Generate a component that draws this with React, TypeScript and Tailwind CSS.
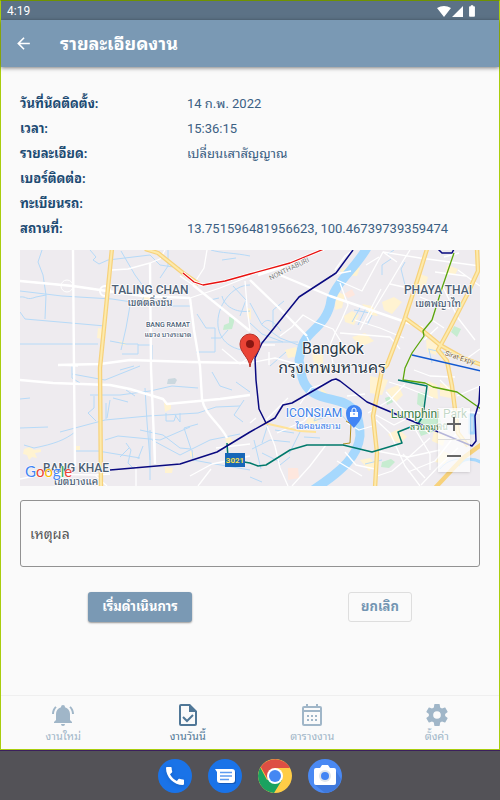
import React from "react";
import { MdArrowBack, MdBatteryFull, MdCall } from "react-icons/md";

const details = [
  { label: "วันที่นัดติดตั้ง:", value: "14 ก.พ. 2022" },
  { label: "เวลา:", value: "15:36:15" },
  { label: "รายละเอียด:", value: "เปลี่ยนเสาสัญญาณ" },
  { label: "เบอร์ติดต่อ:", value: "" },
  { label: "ทะเบียนรถ:", value: "" },
  { label: "สถานที่:", value: "13.751596481956623, 100.46739739359474" },
];

const canals = [
  "M20 297C27 296 26 301 36 297L46 295 43 275 38 262 42 250",
  "M20 312L25 319 71 323 105 326M46 295L45 319M20 291L62 296 112 299 158 306",
  "M20 344H72L98 344M90 250L96 257 93 260 99 264 108 260M108 260L150 255 160 265 180 268",
  "M121 251L135 275 146 290 141 305M131 300L126 328 121 350M110 341L126 344H138V354H122M138 345H152V360",
  "M168 250V266L160 278M158 306L190 306M197 314L206 328H215V352H196M210 300L219 298",
  "M250 285C232 285 216 306 218 326C220 341 231 350 250 351M222 296C225 309 240 313 250 311M228 330L221 338H211M233 286L246 300 240 316",
  "M211 250C220 253 236 253 250 256M222 260L236 258",
  "M72 366V378L80 383M72 374L105 380 140 366M20 399L30 398M90 395H120L150 391 172 386 198 388",
  "M94 396V408L88 413 96 421M106 403V419M110 400L107 418M113 398L128 402M126 390L135 396M145 388L147 422 150 460",
  "M20 428L48 427M60 432L105 420 148 416 198 413 216 407 240 406M75 432C65 440 54 444 34 448L24 445",
  "M105 440L118 436 160 440 190 427M140 430L163 435 180 448 191 449 184 428 198 424",
  "M126 443L131 450 128 463 134 469M129 448L120 457M143 446L138 459M75 451H98L140 458M150 430V480",
  "M166 413V421H174L176 415M175 415L180 422V413M152 440L180 455 210 440 240 434M192 450L193 460 215 464 250 470",
  "M212 372L220 386 232 390M244 400L234 415 243 422M236 382L250 392M120 370L134 366",
  "M250 303L262 325 280 338 306 348M250 323L262 334 283 342M262 324C268 316 275 323 281 331M270 366L286 352",
  "M250 342H298M273 327V310L284 301M382 275V265L391 259M388 254L394 250M405 262L401 269 405 285",
  "M361 306L352 322M366 308L358 325M372 315L367 325M354 310L370 313M429 350L432 363M428 349L451 354",
  "M252 449L270 440 290 442M262 453L280 462M275 430L294 433M300 432L289 454M280 465L290 457M250 477L262 482M254 440L261 469M268 424L262 443",
  "M319 410L314 421 325 417M321 427L334 424M304 437L320 438M340 413L347 421M365 464L382 460M440 469C450 456 467 458 480 461",
];

const minorRoads = [
  "M112 270L128 269 150 263 160 259 165 250",
  "M207 250L204 268 193 285M193 285L180 276",
  "M190 298L220 288 250 276M58 365L78 366M20 281L73 286",
  "M246 300L250 330M245 281L247 306M222 349L240 364 250 357",
  "M250 363L275 358 300 365M280 336L292 327 303 315 315 322 333 329 345 348",
  "M255 345L275 345M269 365V352M307 337L313 350M330 349L333 363M340 333L390 337 400 349",
  "M335 270L345 256 353 250M351 271L331 275M337 280L362 291 383 252 397 262",
  "M340 283L348 305 342 319 335 333 330 345M383 252L420 258 480 266",
  "M367 321L390 283 403 261 410 250M366 265L379 257M360 330L381 289M355 320L380 328 404 338",
  "M432 320L444 328M424 340L438 327M435 272L466 276M444 257L459 253M414 370L430 376 455 377",
  "M389 382L405 387 433 398M368 413L390 400 405 384M386 392L407 415 430 434",
  "M376 415L394 425 420 412M376 420L390 433 405 466 420 486M377 451L408 457 440 450",
  "M337 461L362 476M326 445L310 466 292 486M267 426L275 446 280 468 288 486M288 398L266 420",
  "M317 407L304 421 277 433M347 423L359 430 376 425M377 476L392 471 410 456 430 438",
  "M300 404L311 388 336 380M345 452L356 465 375 469M403 454L425 478M347 396L365 394",
  "M408 472L435 461 456 434M421 485L438 467 458 448M415 429L430 454 430 470",
  "M190 476L212 464 250 456M198 486L211 469M216 448L250 444",
  "M20 479L44 474 95 475 110 474M136 466V486M95 475L107 486M155 464V440",
  "M250 423L256 418M440 380L451 391M457 396L480 386M446 410L480 413M462 362L480 349",
  "M458 270L480 286M443 287L458 318 475 340M408 288L390 284M420 297L450 309",
];

const blocks = [
  "M140 295h12v6h-8zM98 328l5 1-1 10-5-1zM119 341l5 1 3 3h-6zM247 308l4 1v11l-4-4z",
  "M24 449l6-2 4 3 7-1v3l-6 1 2 5-5-1-3 3-2-5-4-1zM164 403h7v6l-6 3zM75 446h5v4h-5zM225 439l5-2 3 4-4 6zM190 451l4 2-1 6-3-4zM165 467l8 1-1 5h-7z",
  "M340 270l10-5 10 3-3 8-14-1zM336 291l9 4-3 13-7 2zM344 316l8-5 7 4-5 10-9-3zM327 300l8 2-2 7z",
  "M418 273l10 4-4 14-10-5zM382 302l12-5 8 5-10 12-8-4zM352 337l13-4 9 8-14 6zM362 304l10 2 6 10-8-1z",
  "M312 352l11 2v18l-7-2-3-10zM285 350l11-3 3 9-11 2zM321 388l7 6-2 8-6-5zM308 418l11 1-4 9-10-3z",
  "M370 376l18 4-6 15-12-2zM440 383l13 4 3 12-16-3zM388 434l11-5 8 8-7 6-8-3zM434 431l12 4-3 11-11-5z",
  "M360 460l10-2 7 7-8 6zM441 450l9 4-5 10-10-2zM386 390l12-5 5 10-7 7z",
  "M447 265l11 4-3 6-9-2zM428 381l9 4 1 14-9-3zM426 339l12 4-2 12-9-3z",
];

function JobMap() {
  return (
    <svg
      viewBox="20 250 460 236"
      preserveAspectRatio="xMidYMid slice"
      className="block h-full w-full"
      role="img"
      aria-label="แผนที่"
      fill="none"
      strokeLinejoin="round"
    >
      <rect x="0" y="200" width="520" height="330" fill="#eeebef" />
      <g fill="#fff3d1">
        {blocks.map((d) => (
          <path key={d} d={d} />
        ))}
      </g>
      <g fill="#c6ecd0">
        <path d="M229 317l5 1v4l-2 7-9 1 1-5 5-2z" />
        <path d="M454 326l7 3-4 8-6-5zM418 392l7 1-2 15-6-4zM385 398l6-2 2 6-6 3zM414 420l25-4 4 12-22 8zM382 462l9-3 4 3-6 6-8-1z" />
      </g>
      <path d="M168 379l7-1 2 2-2 4h-8z" fill="#cbd8df" />
      <path d="M344 294l8-5 3 6-7 3zM288 468l10 0 1 10-11 2z" fill="#fee7de" />
      <g stroke="#b6daf8" strokeWidth="1">
        {canals.map((d) => (
          <path key={d} d={d} />
        ))}
      </g>
      <path
        d="M368 246C356 268 336 282 331 300C328 326 304 333 302 347L299 360L302 377C309 404 340 395 352 408C358 414 360 423 360 436C358 456 342 471 313 490"
        stroke="#a6d8fd"
        strokeWidth="9"
      />
      <path d="M470 415h4v18h-4zM458 466C462 457 475 458 482 463" stroke="#a6d8fd" strokeWidth="3" />
      <g stroke="#fff" strokeWidth="1.3">
        {minorRoads.map((d) => (
          <path key={d} d={d} />
        ))}
      </g>
      <g stroke="#fff" strokeWidth="2.4">
        <path d="M20 281L73 286 100 290 143 296 190 298M73 250L74 368 75 466M150 263L151 368 155 464" />
        <path d="M190 298L194 330 200 366 202 399C205 416 220 423 227 438M193 285L250 331" />
        <path d="M58 365L100 364 130 360 190 362 250 363M20 380L53 383 110 385 130 389 163 399 167 404 220 399 250 395" />
        <path d="M250 280L277 306 307 336M280 275L330 296 423 328M258 275L285 266" />
        <circle cx="67" cy="286" r="6" strokeWidth="1" />
        <circle cx="105" cy="291" r="5" strokeWidth="2" />
      </g>
      <path d="M264 423L300 431 316 432" stroke="#ffe39a" strokeWidth="2" />
      <g stroke="#f7d27c" strokeWidth="4.4">
        <path d="M112 248L107 298 100 368 101 488M145 249L158 253 183 273 199 284" />
        <path d="M427 249L418 278 405 318 387 365 382 370 373 416 377 453 375 488M405 318L423 331 440 345 463 358 482 365" />
        <path d="M477 249L478 271 467 295 450 328 438 350 447 361 452 386 458 433 468 446M482 444L463 458 435 488" />
      </g>
      <g stroke="#fdeaab" strokeWidth="2">
        <path d="M112 248L107 298 100 368 101 488M145 249L158 253 183 273 199 284" />
        <path d="M427 249L418 278 405 318 387 365 382 370 373 416 377 453 375 488M405 318L423 331 440 345 463 358 482 365" />
        <path d="M477 249L478 271 467 295 450 328 438 350 447 361 452 386 458 433 468 446" />
      </g>
      <path d="M183 273L194 282 203 285 225 281 250 274 290 263 324 249" stroke="#fff" strokeWidth="3" />
      <path d="M183 273L194 282 203 285 225 281 250 274 290 263 324 249" stroke="#e8110f" strokeWidth="1.3" />
      <g strokeWidth="1.5">
        <path d="M454 253L442 288 432 320 423 331 424 336 412 353 405 368 403 380 425 383 433 387 457 392 481 409" stroke="#5aa50a" strokeWidth="1.3" />
        <path d="M412 355L481 371" stroke="#1259d1" />
        <path d="M346 421L351 424 350 443 343 444" stroke="#b08d1e" strokeWidth="1" />
        <path d="M227 443L228 458 238 461 250 463 258 466 266 465 290 450 307 445 343 445 372 452 402 443 398 432 418 424 423 416 427 386 398 380" stroke="#00796b" />
        <path d="M353 250L336 273 299 297 262 343 255 358 256 380 259 409 266 423" stroke="#0a0a80" />
        <path d="M110 470L180 464 217 452 250 432 266 423 275 418 283 405 292 403 332 380 336 379 340 381 367 402 417 423 472 446 476 441 475 416 479 403 480 386" stroke="#0a0a80" />
        <path d="M438 249L442 253H452L454 249" stroke="#0a0a80" />
      </g>
      <g fill="#4c6075" stroke="#fff" strokeWidth="1.6" paintOrder="stroke" textAnchor="middle">
        <g fontWeight="500">
          <text x="150" y="294" fontSize="12">TALING CHAN</text>
          <text x="150" y="306" fontSize="10">เขตตลิ่งชัน</text>
          <text x="168" y="327" fontSize="7">BANG RAMAT</text>
          <text x="168" y="337" fontSize="7">แขวง บางระมาด</text>
          <text x="438" y="294" fontSize="12">PHAYA THAI</text>
          <text x="438" y="307" fontSize="10">เขตพญาไท</text>
          <text x="76" y="472" fontSize="12">BANG KHAE</text>
          <text x="76" y="485" fontSize="10">เขตบางแค</text>
        </g>
        <text x="290" y="271" fontSize="7" fill="#777" strokeWidth="1" transform="rotate(-26 290 271)">NONTHABURI</text>
        <text x="459" y="360" fontSize="7" fill="#735b35" strokeWidth="1" transform="rotate(18 459 360)">Sirat Expy</text>
        <g fill="#2b3947">
          <text x="333" y="354" fontSize="16">Bangkok</text>
          <text x="332" y="373" fontSize="16">กรุงเทพมหานคร</text>
        </g>
        <g fill="#3b80e8">
          <text x="314" y="417" fontSize="12">ICONSIAM</text>
          <text x="318" y="429" fontSize="9">ไอคอนสยาม</text>
        </g>
        <g fill="#397d46">
          <text x="429" y="418" fontSize="12">Lumphini Park</text>
          <text x="429" y="430" fontSize="9">สวนลุมพินี</text>
        </g>
      </g>
      <path d="M354 428C350 424 346 420 346 413a8 8 0 0 1 16 0C362 420 357 424 354 428Z" fill="#4285f4" />
      <path d="M350 412h8v5h-8z" fill="#fff" />
      <path d="M352 412v-2a2 2 0 0 1 4 0v2" stroke="#fff" strokeWidth="1" />
      <path d="M353 414h2" stroke="#4285f4" />
      <rect x="225" y="453" width="20" height="14" fill="#1767b8" />
      <text x="235" y="463" fontSize="8" fontWeight="700" fill="#f9e04b" textAnchor="middle">3021</text>
      <path d="M250 367C249 357 240 353 240 344a10 10 0 0 1 20 0C260 353 251 357 250 367Z" fill="#ea4335" stroke="#b63229" strokeWidth="1" />
      <circle cx="250" cy="344" r="4" fill="#891611" />
      <text x="25" y="477" className="font-['Lato',sans-serif]" fontSize="15" stroke="#fff" strokeWidth="1" paintOrder="stroke">
        <tspan fill="#4285f4">G</tspan>
        <tspan fill="#ea4335">o</tspan>
        <tspan fill="#fbbc05">o</tspan>
        <tspan fill="#4285f4">g</tspan>
        <tspan fill="#34a853">l</tspan>
        <tspan fill="#ea4335">e</tspan>
      </text>
    </svg>
  );
}

const BellIcon = () => (
  <svg viewBox="0 0 24 24" className="size-6" fill="currentColor" aria-hidden="true">
    <path d="M21,19V20H3V19L5,17V11C5,7.9 7.03,5.17 10,4.29C10,4.19 10,4.1 10,4A2,2 0 0,1 12,2A2,2 0 0,1 14,4C14,4.1 14,4.19 14,4.29C16.97,5.17 19,7.9 19,11V17L21,19M14,21A2,2 0 0,1 12,23A2,2 0 0,1 10,21M19.75,3.19L18.33,4.61C20.04,6.3 21,8.6 21,11H23C23,8.07 21.84,5.25 19.75,3.19M1,11H3C3,8.6 3.96,6.3 5.67,4.61L4.25,3.19C2.16,5.25 1,8.07 1,11Z" />
  </svg>
);

const TaskIcon = () => (
  <svg viewBox="0 0 24 24" className="size-6" aria-hidden="true">
    <path d="M14 1H5a2 2 0 0 0-2 2v18a2 2 0 0 0 2 2h14a2 2 0 0 0 2-2V8ZM5 3h8v6h6v12H5Z" fill="currentColor" />
    <path d="M7 14l4 4 6-6" fill="none" stroke="currentColor" strokeWidth="2" />
  </svg>
);

const CalendarIcon = () => (
  <svg viewBox="0 0 24 24" className="size-6" fill="currentColor" aria-hidden="true">
    <path d="M6 1h2v2h8V1h2v2h2a2 2 0 0 1 2 2v16a2 2 0 0 1-2 2H4a2 2 0 0 1-2-2V5a2 2 0 0 1 2-2h2ZM4 5v2h16V5ZM4 9v12h16V9ZM7 12h2v2H7ZM11 12h2v2h-2ZM15 12h2v2h-2ZM7 16h2v2H7ZM11 16h2v2h-2ZM15 16h2v2h-2Z" fillRule="evenodd" />
  </svg>
);

const CogIcon = () => (
  <svg viewBox="1 1 22 22" className="size-6" fill="currentColor" aria-hidden="true">
    <path d="M12,15.5A3.5,3.5 0 0,1 8.5,12A3.5,3.5 0 0,1 12,8.5A3.5,3.5 0 0,1 15.5,12A3.5,3.5 0 0,1 12,15.5M19.43,12.97C19.47,12.65 19.5,12.33 19.5,12C19.5,11.67 19.47,11.34 19.43,11L21.54,9.37C21.73,9.22 21.78,8.95 21.66,8.73L19.66,5.27C19.54,5.05 19.27,4.96 19.05,5.05L16.56,6.05C16.04,5.66 15.5,5.32 14.87,5.07L14.5,2.42C14.46,2.18 14.25,2 14,2H10C9.75,2 9.54,2.18 9.5,2.42L9.13,5.07C8.5,5.32 7.96,5.66 7.44,6.05L4.95,5.05C4.73,4.96 4.46,5.05 4.34,5.27L2.34,8.73C2.21,8.95 2.27,9.22 2.46,9.37L4.57,11C4.53,11.34 4.5,11.67 4.5,12C4.5,12.33 4.53,12.65 4.57,12.97L2.46,14.63C2.27,14.78 2.21,15.05 2.34,15.27L4.34,18.73C4.46,18.95 4.73,19.03 4.95,18.95L7.44,17.94C7.96,18.34 8.5,18.68 9.13,18.93L9.5,21.58C9.54,21.82 9.75,22 10,22H14C14.25,22 14.46,21.82 14.5,21.58L14.87,18.93C15.5,18.67 16.04,18.34 16.56,17.94L19.05,18.95C19.27,19.03 19.54,18.95 19.66,18.73L21.66,15.27C21.78,15.05 21.73,14.78 21.54,14.63L19.43,12.97Z" />
  </svg>
);

const tabs = [
  { label: "งานใหม่", Icon: BellIcon, active: false },
  { label: "งานวันนี้", Icon: TaskIcon, active: true },
  { label: "ตารางงาน", Icon: CalendarIcon, active: false },
  { label: "ตั้งค่า", Icon: CogIcon, active: false },
];

function Dock() {
  return (
    <footer className="flex h-[50px] items-center justify-center gap-4 border-t border-[#3b1f5c] bg-[#535257]">
      <button aria-label="Phone" className="flex size-[34px] items-center justify-center rounded-full bg-[#1a73e8] text-white">
        <MdCall className="size-6 drop-shadow-sm" />
      </button>
      <button aria-label="Messages" className="flex size-[34px] items-center justify-center rounded-full bg-[#1a73e8]">
        <svg viewBox="0 0 34 34" className="size-full" aria-hidden="true">
          <path d="M10 12h16a2 2 0 0 1 2 2v9a2 2 0 0 1-2 2H12a2 2 0 0 1-2-2Z" fill="#1559b8" />
          <path d="M7 10h17a3 3 0 0 1 3 3v8a3 3 0 0 1-3 3H12a3 3 0 0 1-3-3v-8Z" fill="#fff" />
          <path d="M12 13.500h12M12 17h12M12 20.500h9" stroke="#5d9bf0" strokeWidth="1.4" />
        </svg>
      </button>
      <button aria-label="Chrome" className="flex size-[34px] items-center justify-center rounded-full">
        <svg viewBox="0 0 34 34" className="size-full" aria-hidden="true">
          <circle cx="17" cy="17" r="17" fill="#ffcd46" />
          <path d="M17 17L9 21 2.3 8.500A17 17 0 0 0 16 34L24 21Z" fill="#1aa260" />
          <path d="M17 9H32A17 17 0 0 0 2.800 8L9.500 20 17 17Z" fill="#dd4f43" />
          <circle cx="17" cy="17" r="8" fill="#fff" />
          <circle cx="17" cy="17" r="6" fill="#4587f3" />
        </svg>
      </button>
      <button aria-label="Camera" className="flex size-[34px] items-center justify-center rounded-full">
        <svg viewBox="0 0 34 34" className="size-full" aria-hidden="true">
          <circle cx="17" cy="17" r="17" fill="#4a89f3" />
          <path d="M28 12L33 20A17 17 0 0 1 17 34L7 26Z" fill="#3f79dc" />
          <path d="M8 9h4l2-3h6l2 3h4a2 2 0 0 1 2 2v13a2 2 0 0 1-2 2H8a2 2 0 0 1-2-2V11a2 2 0 0 1 2-2Z" fill="#fff" />
          <circle cx="17" cy="17" r="6" fill="#dfe5ec" />
          <circle cx="17" cy="17" r="4" fill="#4285f4" />
        </svg>
      </button>
    </footer>
  );
}

export default function App() {
  return (
    <div className="flex min-h-screen flex-col bg-[#fafafa] font-['Roboto','Noto_Sans_Thai_Looped','Noto_Looped_Thai','Loma','Waree','Garuda','Noto_Sans_Thai',sans-serif]">
      <div className="flex flex-1 flex-col border border-[#a9cd0d] border-t-[#6f9200]">
        <div className="flex h-[19px] items-center justify-between bg-[#5c7286] pr-5 pl-[6px] text-white">
          <span className="text-xs leading-4">4:19</span>
          <div className="flex items-center">
            <svg viewBox="0 0 28 12" className="h-3 w-7" fill="currentColor" aria-hidden="true">
              <path d="M0 3Q7-1 14 3L7 12ZM15 12L26 1V12Z" />
            </svg>
            <MdBatteryFull className="size-[14px]" />
          </div>
        </div>
        <header className="flex h-[47px] items-center gap-[27px] bg-[#7a99b4] pl-[13px] text-white shadow-[0_1px_4px_rgba(0,0,0,0.5)]">
          <button aria-label="ย้อนกลับ">
            <MdArrowBack className="size-[19px]" />
          </button>
          <h1 className="text-lg leading-6 font-bold">รายละเอียดงาน</h1>
        </header>

        <main className="flex-1 px-[19px] pt-6">
          <dl className="text-[13px] leading-[25px] text-[#1d4b73]">
            {details.map(({ label, value }) => (
              <div key={label} className="grid h-[25px] grid-cols-[167px_1fr]">
                <dt className="font-bold">{label}</dt>
                <dd className="text-[#3b6083]">{value}</dd>
              </div>
            ))}
          </dl>

          <div className="relative mt-[9px] h-[236px] overflow-hidden">
            <JobMap />
            <div className="absolute right-[10px] bottom-[14px] flex w-8 flex-col divide-y divide-[#dddddd] bg-white/70 shadow-sm">
              <button aria-label="Zoom in" className="flex h-8 items-center justify-center">
                <svg viewBox="0 0 14 14" className="size-[14px]" stroke="#666" strokeWidth="2" aria-hidden="true">
                  <path d="M7 0V14M0 7H14" />
                </svg>
              </button>
              <button aria-label="Zoom out" className="flex h-8 items-center justify-center">
                <svg viewBox="0 0 14 14" className="size-[14px]" stroke="#666" strokeWidth="2" aria-hidden="true">
                  <path d="M0 7H14" />
                </svg>
              </button>
            </div>
          </div>

          <input
            type="text"
            aria-label="เหตุผล"
            placeholder="เหตุผล"
            className="mt-[14px] block h-[67px] w-full rounded-[3px] border border-[#929292] bg-transparent px-[9px] text-sm text-[#444444] placeholder:text-[#555555]"
          />

          <div className="mt-[25px] flex justify-between px-[68px] text-[13px] leading-5 font-bold">
            <button className="h-[30px] w-[104px] rounded-[3px] bg-[#7a99b4] text-white shadow-[0_1px_2px_rgba(0,0,0,0.4)]">
              เริ่มดำเนินการ
            </button>
            <button className="h-[30px] w-16 rounded-[3px] border border-[#dedede] text-[#7395b2]">ยกเลิก</button>
          </div>
        </main>

        <nav className="grid h-[54px] grid-cols-4 border-t border-[#efefef]">
          {tabs.map(({ label, Icon, active }) => (
            <button
              key={label}
              aria-current={active ? "page" : undefined}
              className={
                active
                  ? "flex flex-col items-center pt-[7px] text-[#507797]"
                  : "flex flex-col items-center pt-[7px] text-[#a0b6c8]"
              }
            >
              <Icon />
              <span className="text-[11px] leading-5">{label}</span>
            </button>
          ))}
        </nav>
      </div>
      <Dock />
    </div>
  );
}
